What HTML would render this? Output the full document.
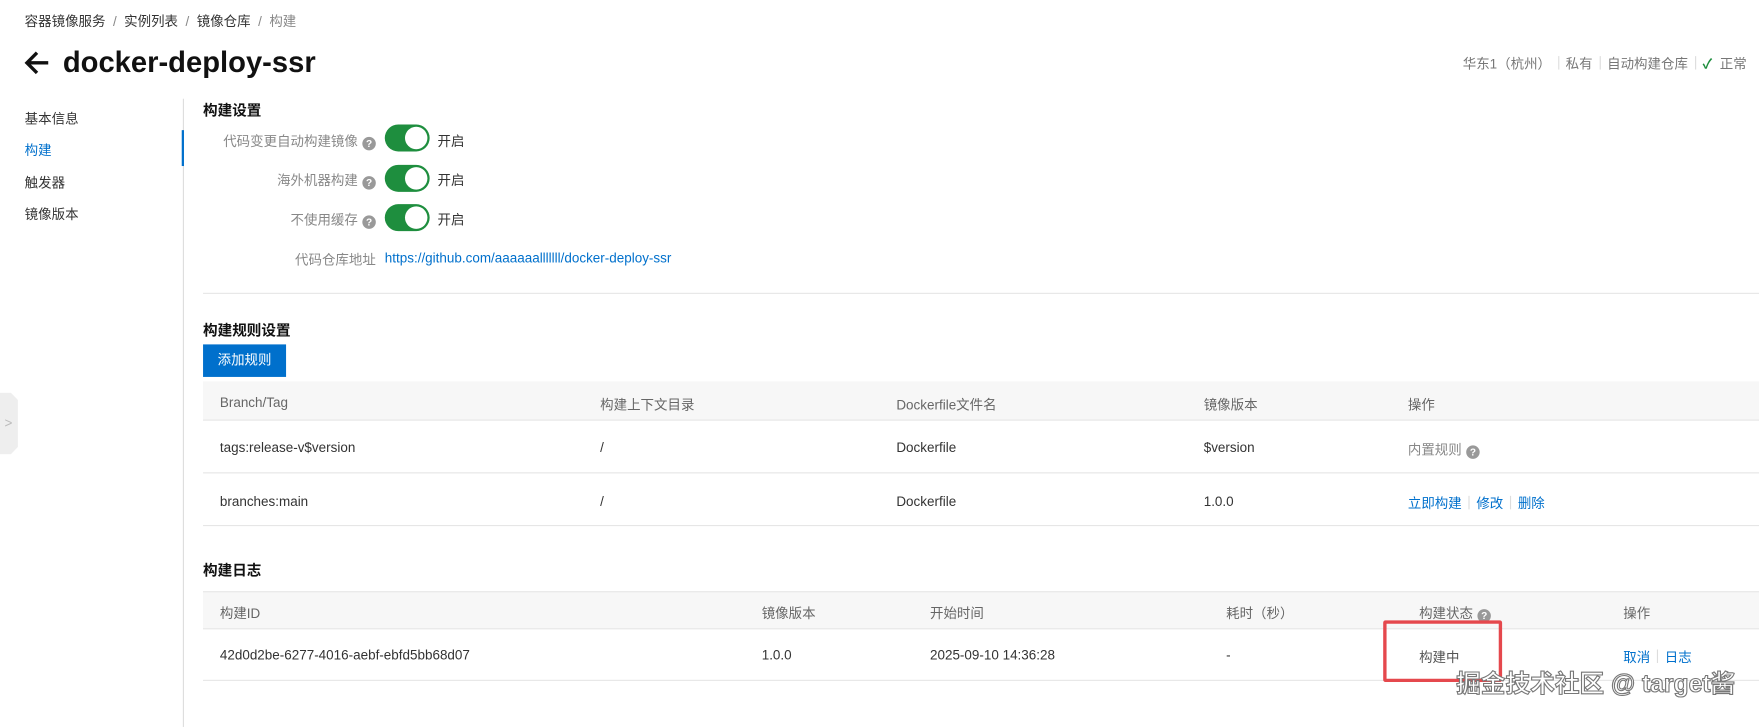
<!DOCTYPE html>
<html><head><meta charset="utf-8"><style>
*{margin:0;padding:0;box-sizing:border-box}
html,body{width:1759px;height:715px;overflow:hidden;background:#fff}
#w{position:absolute;left:0;top:0;width:1568px;height:638px;transform:scale(1.12181);transform-origin:0 0;font-family:"Liberation Sans","Noto Sans CJK SC",sans-serif;font-size:12px;color:#333}
.a{position:absolute;white-space:nowrap}
.g{color:#888}
.link{color:#0070cc}
.tg{position:absolute;width:40px;height:24px;border-radius:12px;background:#1e8e3e}
.tg::after{content:"";position:absolute;right:2px;top:2px;width:20px;height:20px;border-radius:50%;background:#fff}
.q{display:inline-block;width:12px;height:12px;border-radius:50%;background:#999;color:#fff;font-size:9px;line-height:12px;text-align:center;font-weight:bold;vertical-align:-1px;margin-left:4px}
.hd{position:absolute;left:181px;right:0;background:#f7f7f7;border-bottom:1px solid #e6e6e6}
.ln{position:absolute;left:181px;right:0;height:1px;background:#e6e6e6}
.sep{display:inline-block;width:1px;height:12px;background:#ddd;margin:0 6px;vertical-align:-1px}
</style></head><body><div id="w">
<div class="a" style="left:22px;top:10px;color:#333">容器镜像服务 <span class="g">&nbsp;/&nbsp;</span> 实例列表 <span class="g">&nbsp;/&nbsp;</span> 镜像仓库 <span class="g">&nbsp;/&nbsp;</span> <span class="g">构建</span></div>
<svg class="a" style="left:21px;top:45px" width="24" height="22" viewBox="0 0 24 22"><path d="M22 11H4M12 2L3 11l9 9" stroke="#111" stroke-width="3" fill="none"/></svg>
<div class="a" style="left:56px;top:40px;font-size:26px;font-weight:bold;color:#111">docker-deploy-ssr</div>
<div class="a g" style="right:11px;top:48px;color:#777">华东1（杭州）<span class="sep"></span>私有<span class="sep"></span>自动构建仓库<span class="sep"></span><span style="color:#1e8e3e;font-weight:bold">✓</span>&nbsp; 正常</div>

<div class="a" style="left:22px;top:97px">基本信息</div>
<div class="a" style="left:22px;top:125px;color:#0070cc">构建</div>
<div class="a" style="left:22px;top:154px">触发器</div>
<div class="a" style="left:22px;top:182px">镜像版本</div>
<div class="a" style="left:163px;top:88px;width:1px;height:560px;background:#ddd"></div>
<div class="a" style="left:162px;top:116px;width:2px;height:32px;background:#0070cc"></div>
<div class="a" style="left:0;top:350px;width:16px;height:55px;background:#eee;clip-path:polygon(0 0,60% 0,100% 12%,100% 88%,60% 100%,0 100%)"></div>
<div class="a" style="left:4px;top:370px;color:#bbb">&gt;</div>

<div class="a" style="left:181px;top:88px;font-size:13px;font-weight:bold;color:#111">构建设置</div>
<div class="a g" style="right:1233px;top:117px">代码变更自动构建镜像<span class="q">?</span></div>
<div class="tg" style="left:343px;top:111px"></div><div class="a" style="left:390px;top:117px">开启</div>
<div class="a g" style="right:1233px;top:152px">海外机器构建<span class="q">?</span></div>
<div class="tg" style="left:343px;top:147px"></div><div class="a" style="left:390px;top:152px">开启</div>
<div class="a g" style="right:1233px;top:187px">不使用缓存<span class="q">?</span></div>
<div class="tg" style="left:343px;top:182px"></div><div class="a" style="left:390px;top:187px">开启</div>
<div class="a g" style="right:1233px;top:223px">代码仓库地址</div>
<div class="a link" style="left:343px;top:223px">https://github.com/aaaaaalllllll/docker-deploy-ssr</div>
<div class="ln" style="top:261px"></div>

<div class="a" style="left:181px;top:284px;font-size:13px;font-weight:bold;color:#111">构建规则设置</div>
<div class="a" style="left:181px;top:307px;width:74px;height:29px;background:#0070cc;color:#fff;text-align:center;line-height:29px">添加规则</div>
<div class="hd" style="top:340px;height:35px"></div>
<div class="a" style="left:196px;top:352px;color:#666">Branch/Tag</div>
<div class="a" style="left:535px;top:352px;color:#666">构建上下文目录</div>
<div class="a" style="left:799px;top:352px;color:#666">Dockerfile文件名</div>
<div class="a" style="left:1073px;top:352px;color:#666">镜像版本</div>
<div class="a" style="left:1255px;top:352px;color:#666">操作</div>
<div class="a" style="left:196px;top:392px">tags:release-v$version</div>
<div class="a" style="left:535px;top:392px">/</div>
<div class="a" style="left:799px;top:392px">Dockerfile</div>
<div class="a" style="left:1073px;top:392px">$version</div>
<div class="a g" style="left:1255px;top:392px">内置规则<span class="q">?</span></div>
<div class="ln" style="top:421px"></div>
<div class="a" style="left:196px;top:440px">branches:main</div>
<div class="a" style="left:535px;top:440px">/</div>
<div class="a" style="left:799px;top:440px">Dockerfile</div>
<div class="a" style="left:1073px;top:440px">1.0.0</div>
<div class="a link" style="left:1255px;top:440px">立即构建<span class="sep"></span>修改<span class="sep"></span>删除</div>
<div class="ln" style="top:468px"></div>

<div class="a" style="left:181px;top:498px;font-size:13px;font-weight:bold;color:#111">构建日志</div>
<div class="hd" style="top:527px;height:34px;border-top:1px solid #e6e6e6"></div>
<div class="a" style="left:196px;top:538px;color:#666">构建ID</div>
<div class="a" style="left:679px;top:538px;color:#666">镜像版本</div>
<div class="a" style="left:829px;top:538px;color:#666">开始时间</div>
<div class="a" style="left:1093px;top:538px;color:#666">耗时（秒）</div>
<div class="a" style="left:1265px;top:538px;color:#666">构建状态<span class="q">?</span></div>
<div class="a" style="left:1447px;top:538px;color:#666">操作</div>
<div class="a" style="left:196px;top:577px">42d0d2be-6277-4016-aebf-ebfd5bb68d07</div>
<div class="a" style="left:679px;top:577px">1.0.0</div>
<div class="a" style="left:829px;top:577px">2025-09-10 14:36:28</div>
<div class="a" style="left:1093px;top:577px">-</div>
<div class="a" style="left:1265px;top:577px;color:#555">构建中</div>
<div class="a link" style="left:1447px;top:577px">取消<span class="sep"></span>日志</div>
<div class="ln" style="top:606px"></div>
<div class="a" style="left:1233px;top:553px;width:106px;height:55px;border:3px solid #e5484d;border-radius:2px"></div>
<div class="a" style="left:1298px;top:592px;font-size:22px;color:#fff;-webkit-text-stroke:1px #777;font-weight:bold">掘金技术社区 @ target酱</div>
</div></body></html>
